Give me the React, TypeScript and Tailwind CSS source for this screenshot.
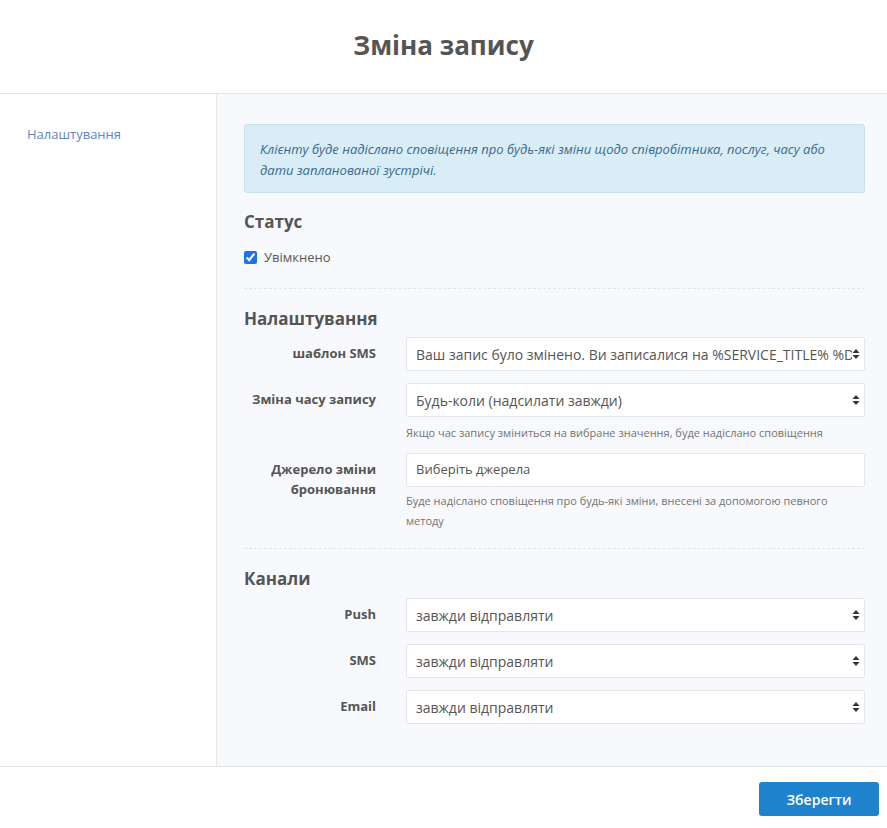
import React from "react";

const Arrows = () => (
  <svg width="8" height="12" viewBox="0 0 8 12" className="shrink-0">
    <path d="M4 1 L7.5 5 H0.5 Z" fill="#333" />
    <path d="M4 11 L7.5 7 H0.5 Z" fill="#333" />
  </svg>
);

const Select = ({ value }: { value: string }) => (
  <div className="h-[34px] bg-white border border-[#e3e6ea] rounded-[2px] flex items-center pl-[9px] pr-[4px] text-[14px] text-[#555] overflow-hidden">
    <span className="flex-1 whitespace-nowrap overflow-hidden">{value}</span>
    <Arrows />
  </div>
);

const Label = ({ children }: { children: React.ReactNode }) => (
  <div className="text-right text-[13px] font-bold text-[#555] leading-[20px] pt-[6px]">{children}</div>
);

const Help = ({ children, mt }: { children: React.ReactNode; mt: string }) => (
  <div className={`text-[11px] text-[#737373] leading-[20px] ${mt}`}>{children}</div>
);

export default function App() {
  return (
    <div className="w-[887px] h-[828px] bg-white flex flex-col" style={{ fontFamily: '"Open Sans", sans-serif' }}>
      <div className="h-[94px] border-b border-[#e5e5e5] flex items-center justify-center shrink-0">
        <h1 className="text-[26px] font-bold text-[#555] leading-none pb-[3px]">Зміна запису</h1>
      </div>
      <div className="flex h-[673px] border-b border-[#e5e5e5]">
        <div className="w-[217px] border-r border-[#e5e5e5] pt-[31px] pl-[27px] shrink-0">
          <div className="text-[13px] text-[#5e86c2] leading-[18px]">Налаштування</div>
        </div>
        <div className="flex-1 bg-[#f8f9fc] pl-[27px] pr-[22px] pt-[30px]">
          <div className="h-[69px] bg-[#d9edf7] border border-[#c4e3ee] rounded-[3px] px-[15px] pt-[14px] text-[13px] italic text-[#3a6a8a] leading-[21px]">
            Клієнту буде надіслано сповіщення про будь-які зміни щодо співробітника, послуг, часу або дати запланованої зустрічі.
          </div>
          <h2 className="text-[17px] font-bold text-[#555] mt-[16px] leading-[26px]">Статус</h2>
          <label className="flex items-center mt-[12px] text-[13px] text-[#555] leading-[20px]">
            <input type="checkbox" defaultChecked className="w-[13px] h-[13px] mr-[7px] accent-[#1a73e8]" />
            Увімкнено
          </label>
          <div className="border-t border-dashed border-[#e3e5ea] mt-[21px]" />
          <h2 className="text-[17px] font-bold text-[#555] mt-[17px] leading-[26px]">Налаштування</h2>
          <div className="grid grid-cols-[132px_1fr] gap-x-[30px] mt-[5px]">
            <Label>шаблон SMS</Label>
            <Select value="Ваш запис було змінено. Ви записалися на %SERVICE_TITLE% %DATE% %TIME%" />
            <div className="col-span-2 h-[12px]" />
            <Label>Зміна часу запису</Label>
            <div>
              <Select value="Будь-коли (надсилати завжди)" />
              <Help mt="mt-[6px]">Якщо час запису зміниться на вибране значення, буде надіслано сповіщення</Help>
            </div>
            <div className="col-span-2 h-[10px]" />
            <Label>Джерело зміни бронювання</Label>
            <div>
              <div className="h-[34px] bg-white border border-[#e3e6ea] rounded-[2px] flex items-center pl-[9px] text-[13px] text-[#555]">
                Виберіть джерела
              </div>
              <Help mt="mt-[4px]">Буде надіслано сповіщення про будь-які зміни, внесені за допомогою певного методу</Help>
            </div>
          </div>
          <div className="border-t border-dashed border-[#e3e5ea] mt-[17px]" />
          <h2 className="text-[17px] font-bold text-[#555] mt-[17px] leading-[26px]">Канали</h2>
          <div className="grid grid-cols-[132px_1fr] gap-x-[30px] gap-y-[12px] mt-[6px]">
            <Label>Push</Label>
            <Select value="завжди відправляти" />
            <Label>SMS</Label>
            <Select value="завжди відправляти" />
            <Label>Email</Label>
            <Select value="завжди відправляти" />
          </div>
        </div>
      </div>
      <div className="flex justify-end pr-[8px] pt-[15px]">
        <button className="w-[120px] h-[34px] bg-[#1f82cc] rounded-[3px] text-white text-[14px] font-semibold">Зберегти</button>
      </div>
    </div>
  );
}
